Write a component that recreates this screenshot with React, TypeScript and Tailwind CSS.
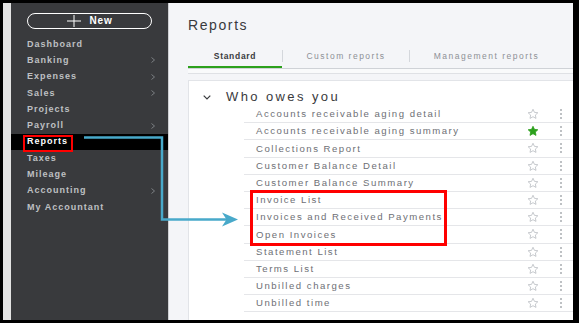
import React from "react";

const navItems: { label: string; chevron?: boolean; active?: boolean }[] = [
  { label: "Dashboard" },
  { label: "Banking", chevron: true },
  { label: "Expenses", chevron: true },
  { label: "Sales", chevron: true },
  { label: "Projects" },
  { label: "Payroll", chevron: true },
  { label: "Reports", active: true },
  { label: "Taxes" },
  { label: "Mileage" },
  { label: "Accounting", chevron: true },
  { label: "My Accountant" },
];

const rows = [
  "Accounts receivable aging detail",
  "Accounts receivable aging summary",
  "Collections Report",
  "Customer Balance Detail",
  "Customer Balance Summary",
  "Invoice List",
  "Invoices and Received Payments",
  "Open Invoices",
  "Statement List",
  "Terms List",
  "Unbilled charges",
  "Unbilled time",
];

function Star({ filled }: { filled?: boolean }) {
  return (
    <svg width="12" height="12" viewBox="0 0 24 24">
      <path
        d="M12 2.5l2.9 6.2 6.8.8-5 4.6 1.3 6.7L12 17.4l-6 3.4 1.3-6.7-5-4.6 6.8-.8z"
        fill={filled ? "#2ca01c" : "none"}
        stroke={filled ? "#2ca01c" : "#b9bcc1"}
        strokeWidth="1.6"
        strokeLinejoin="round"
      />
    </svg>
  );
}

function Kebab() {
  return (
    <div className="flex flex-col items-center gap-[2px] w-[4px]">
      <span className="block w-[2px] h-[2px] bg-[#a9acb1] rounded-full" />
      <span className="block w-[2px] h-[2px] bg-[#a9acb1] rounded-full" />
      <span className="block w-[2px] h-[2px] bg-[#a9acb1] rounded-full" />
    </div>
  );
}

export default function App() {
  return (
    <div
      className="relative w-[579px] h-[323px] bg-black pt-[3px] pl-[3px] pr-[6px] pb-[3px] overflow-hidden"
      style={{ fontFamily: '"Liberation Sans", Arial, sans-serif' }}
    >
      <div className="flex h-full">
        {/* left strip */}
        <div className="w-[8px] h-full bg-[#e3e3e3]" />
        {/* sidebar */}
        <div className="w-[158px] h-full bg-[#393a3d] border-r border-[#cfd0d3] flex flex-col">
          <div className="pt-[10px] pl-[16px]">
            <div className="w-[125px] h-[16px] rounded-full border-[1.5px] border-white flex items-center justify-center gap-[9px]">
              <svg width="14" height="12" viewBox="0 0 14 12">
                <path d="M0 6H14M7 0V12" stroke="#ffffff" strokeWidth="1" />
              </svg>
              <span className="text-white text-[10px] font-bold tracking-[0.8px] leading-none">New</span>
            </div>
          </div>
          <div className="mt-[7px] flex flex-col">
            {navItems.map((it) => (
              <div
                key={it.label}
                className={
                  "relative h-[16.3px] flex items-center pl-[16px] pr-[13px] " +
                  (it.active ? "bg-black" : "")
                }
              >
                <span
                  className={
                    "flex-1 text-[9px] font-bold tracking-[1px] leading-none " +
                    (it.active ? "text-white" : "text-[#bfc0c3]")
                  }
                >
                  {it.label}
                </span>
                {it.chevron && (
                  <svg width="4" height="6" viewBox="0 0 4 6">
                    <path d="M0.5 0.5L3.5 3L0.5 5.5" fill="none" stroke="#8d9096" strokeWidth="0.8" />
                  </svg>
                )}
                {it.active && (
                  <div className="absolute left-[12px] top-[1px] w-[50px] h-[17px] border-[2.5px] border-[#ff0000]" />
                )}
              </div>
            ))}
          </div>
        </div>
        {/* content */}
        <div className="flex-1 h-full bg-[#f4f5f8] pl-[19px] flex flex-col">
          <div className="mt-[14px] h-[16px] leading-[16px] text-[14px] tracking-[1.6px] text-[#393a3d]">
            Reports
          </div>
          <div className="mt-[14px] flex h-[21px]">
            <div className="w-[94px] h-full flex items-center justify-center border-b-2 border-[#2ca01c]">
              <span className="text-[8.5px] font-bold tracking-[0.7px] text-[#393a3d]">Standard</span>
            </div>
            <div className="w-px h-[12px] mt-[3px] bg-[#d4d7dc]" />
            <div className="w-[126px] h-full flex items-center justify-center pb-[2px]">
              <span className="text-[8.5px] tracking-[1.5px] text-[#8d9096]">Custom reports</span>
            </div>
            <div className="w-px h-[12px] mt-[3px] bg-[#d4d7dc]" />
            <div className="w-[153px] h-full flex items-center justify-center pb-[2px]">
              <span className="text-[8.5px] tracking-[1.5px] text-[#8d9096]">Management reports</span>
            </div>
          </div>
          <div className="h-px bg-[#cfd2d7]" />
          <div className="h-[5px] bg-[#f9fafb] border-b border-[#dfe1e5]" />
          <div className="mt-[6px] flex-1 bg-white border-l border-t border-[#e2e4e8] flex flex-col">
            <div className="h-[25px] pt-[9px] pl-[14px] flex items-start">
              <svg width="8" height="5" viewBox="0 0 8 5" className="mt-[5px]">
                <path d="M0.7 0.7L4 4L7.3 0.7" fill="none" stroke="#393a3d" strokeWidth="1.2" />
              </svg>
              <span className="ml-[15px] text-[13px] leading-[14px] tracking-[2.4px] text-[#393a3d]">
                Who owes you
              </span>
            </div>
            <div className="relative ml-[55px] flex flex-col">
              {rows.map((r, i) => (
                <div key={r} className="h-[17.2px] flex items-center border-b border-[#e5e6e9] pr-[10px]">
                  <span className="flex-1 pl-[12px] text-[9.6px] tracking-[1.5px] text-[#6e6f75] leading-none">
                    {r}
                  </span>
                  <Star filled={i === 1} />
                  <div className="w-[20px]" />
                  <Kebab />
                </div>
              ))}
              <div className="absolute left-[6px] top-[84px] w-[197px] h-[56px] border-[3px] border-[#ff0000]" />
            </div>
          </div>
        </div>
      </div>
      {/* annotation arrow */}
      <svg className="absolute inset-0 pointer-events-none" width="579" height="323" viewBox="0 0 579 323">
        <path d="M84 137.5H162V219.5H228" fill="none" stroke="#48a9ca" strokeWidth="2.5" />
        <polygon points="222,212.5 238,219.5 222,226.5 226.5,219.5" fill="#48a9ca" />
      </svg>
    </div>
  );
}
